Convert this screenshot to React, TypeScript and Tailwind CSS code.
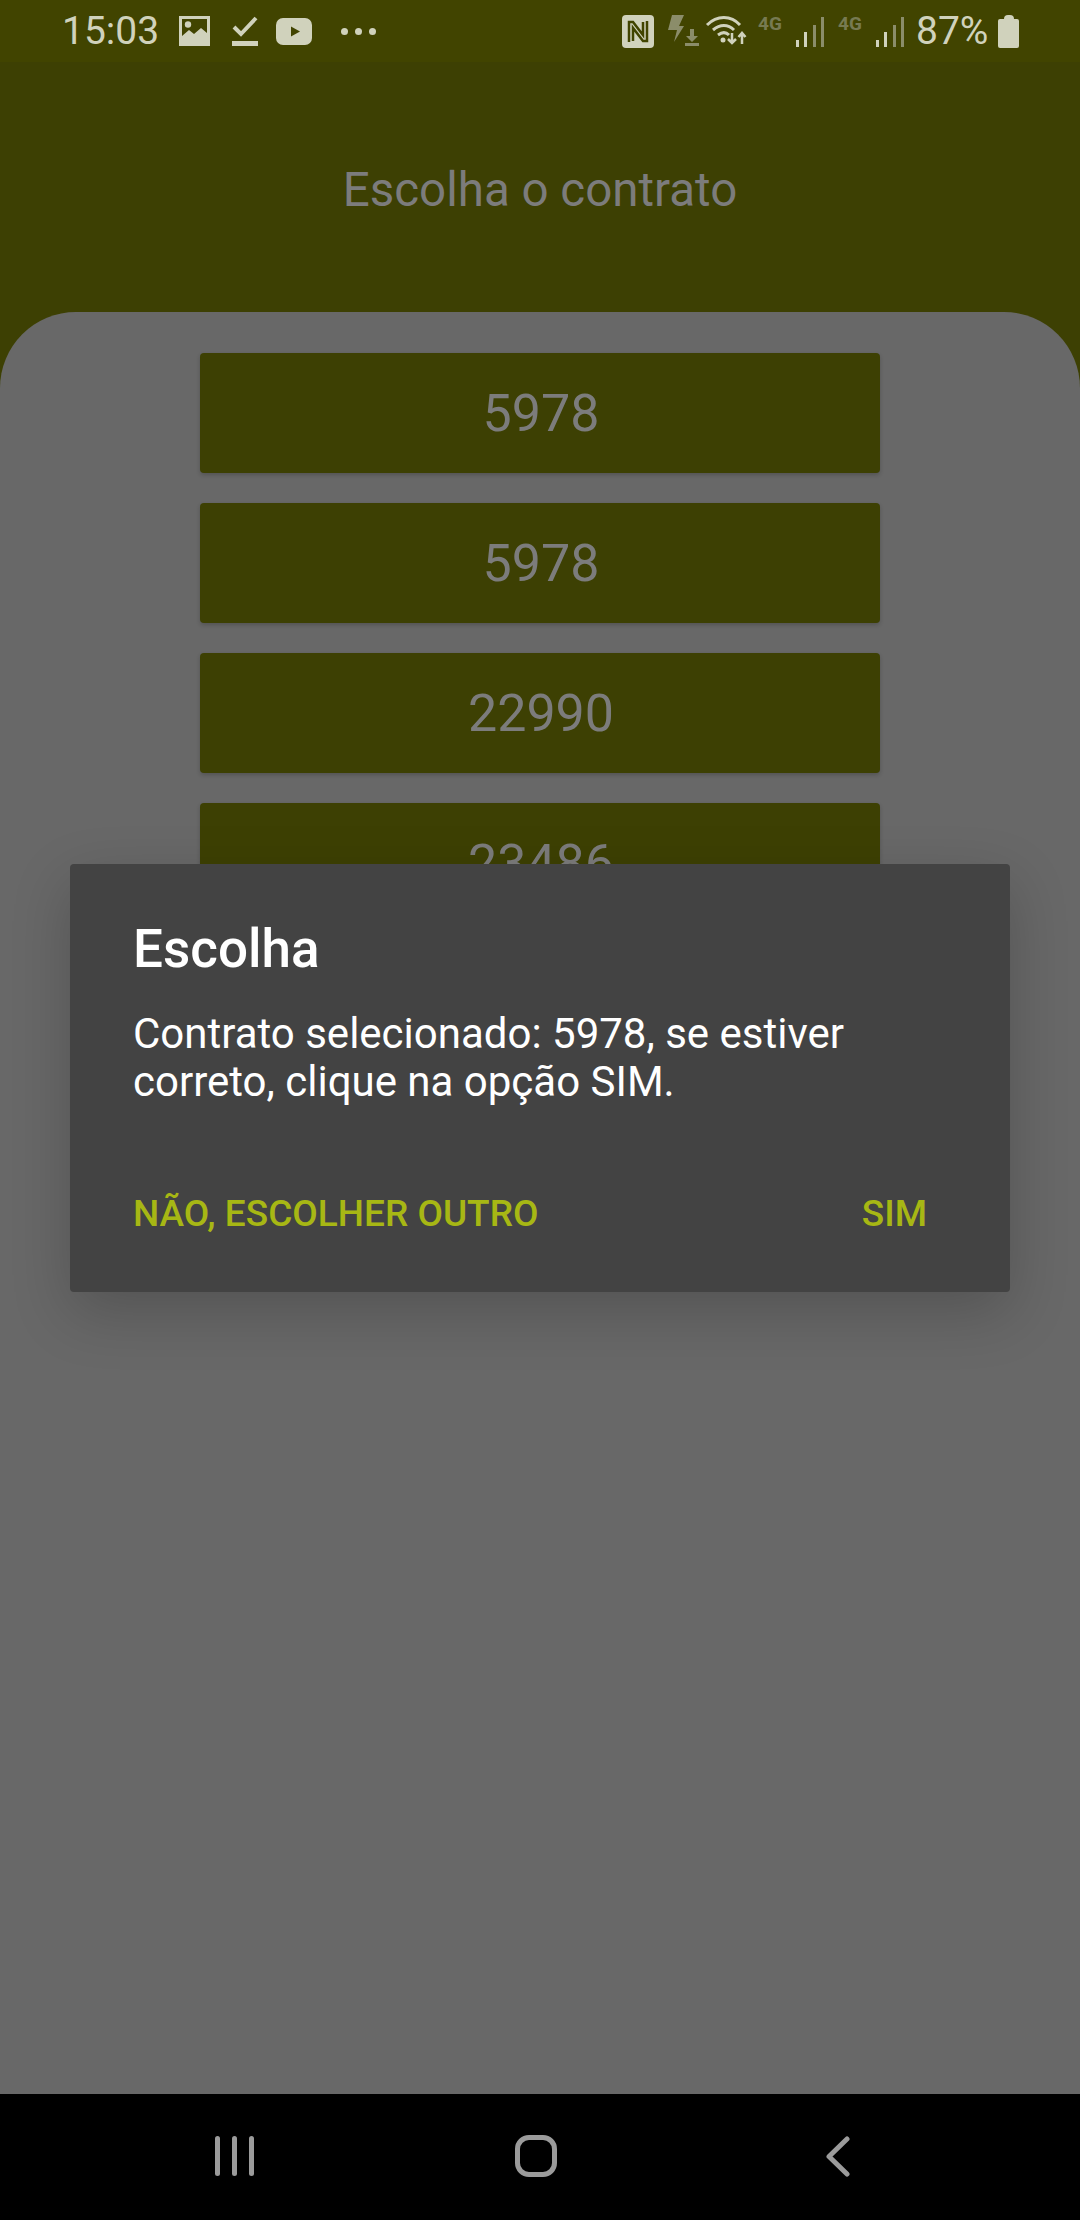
const contracts = ['5978', '5978', '22990', '23486']

function ImageIcon() {
  return (
    <svg width="31" height="30" viewBox="0 0 31 30" className="shrink-0">
      <path fillRule="evenodd" d="M0 0h31v30H0z M3 3v17l7-6 5 4 7-6 6 5V3z" fill="#d0d2bc" />
      <circle cx="9" cy="8.500" r="3.200" fill="#d0d2bc" />
    </svg>
  )
}

function CheckIcon() {
  return (
    <svg width="26" height="30" viewBox="0 0 26 30" className="shrink-0">
      <path d="M2 11l7 7L24 2" fill="none" stroke="#d0d2bc" strokeWidth="4" />
      <rect x="0" y="25" width="26" height="5" fill="#d0d2bc" />
    </svg>
  )
}

function YoutubeIcon() {
  return (
    <svg width="36" height="27" viewBox="0 0 36 27" className="shrink-0">
      <rect x="0" y="0" width="36" height="27" rx="7" fill="#d0d2bc" />
      <path d="M15 8.500l9 5-9 5z" fill="#414400" />
    </svg>
  )
}

function NfcIcon() {
  return (
    <svg width="32" height="33" viewBox="0 0 32 33" className="shrink-0">
      <rect x="0" y="0" width="32" height="33" rx="4" fill="#d0d2bc" />
      <path d="M7 27V7h4l10 13V7M25 6v20h-4L11 13v13" fill="none" stroke="#414400" strokeWidth="2.500" />
    </svg>
  )
}

function BoltDownIcon() {
  return (
    <svg width="32" height="32" viewBox="0 0 32 32" className="shrink-0">
      <path d="M4 0h12l-5 11h5L6 27l3-12H0z" fill="#8b8d6a" />
      <path d="M22 14h4v7h4l-6 6-6-6h4z M17 28h14v3H17z" fill="#8b8d6a" />
    </svg>
  )
}

function WifiIcon() {
  return (
    <svg width="42" height="31" viewBox="0 0 42 31" className="shrink-0">
      <path d="M2 11C12 1 26 1 35 11M8 16c7-6 15-6 21 0M13 21c4-3 8-3 11 0" fill="none" stroke="#d0d2bc" strokeWidth="3" />
      <circle cx="18" cy="26" r="2.500" fill="#d0d2bc" />
      <path d="M27 19v9M23 25l4 4 4-4M37 30V19M33.500 23l3.500-4 3.500 4" fill="none" stroke="#d0d2bc" strokeWidth="2.500" />
    </svg>
  )
}

function SignalIcon() {
  return (
    <svg width="28" height="30" viewBox="0 0 28 30" className="shrink-0">
      <rect x="0" y="23" width="3" height="7" fill="#d0d2bc" />
      <rect x="8" y="15" width="3" height="15" fill="#d0d2bc" />
      <rect x="17" y="8" width="3" height="22" fill="#8b8d6a" />
      <rect x="25" y="0" width="3" height="30" fill="#8b8d6a" />
    </svg>
  )
}

function Network() {
  return (
    <div className="flex items-start">
      <span className="w-[38px] text-[19px] leading-[16px] font-bold text-[#777a52]">4G</span>
      <div className="mt-[1px]">
        <SignalIcon />
      </div>
    </div>
  )
}

function StatusBar() {
  return (
    <div className="flex h-[62px] items-center justify-between bg-[#414400] pr-[61px] pl-[62px] text-[#d0d2bc]">
      <div className="flex items-center">
        <span className="w-[117px] text-[39px] leading-none">15:03</span>
        <ImageIcon />
        <div className="ml-[22px]">
          <CheckIcon />
        </div>
        <div className="ml-[18px]">
          <YoutubeIcon />
        </div>
        <div className="ml-[29px] flex gap-[7px]">
          <span className="h-[7px] w-[7px] rounded-full bg-[#d0d2bc]" />
          <span className="h-[7px] w-[7px] rounded-full bg-[#d0d2bc]" />
          <span className="h-[7px] w-[7px] rounded-full bg-[#d0d2bc]" />
        </div>
      </div>
      <div className="flex items-center">
        <NfcIcon />
        <div className="ml-[14px]">
          <BoltDownIcon />
        </div>
        <div className="ml-[5px] -mt-[4px]">
          <WifiIcon />
        </div>
        <div className="ml-[11px]">
          <Network />
        </div>
        <div className="ml-[14px]">
          <Network />
        </div>
        <span className="ml-[12px] w-[72px] text-[39px] leading-none">87%</span>
        <div className="ml-[10px] flex flex-col items-center">
          <span className="h-[4px] w-[10px] rounded-t-sm bg-[#d0d2bc]" />
          <span className="h-[29px] w-[21px] rounded-[2px] bg-[#d0d2bc]" />
        </div>
      </div>
    </div>
  )
}

function NavBar() {
  return (
    <div className="flex h-[126px] items-start bg-black pt-[42px]">
      <div className="ml-[215px] flex h-[40px] gap-[12px]">
        <span className="w-[5px] rounded-full bg-[#9b9b9b]" />
        <span className="w-[5px] rounded-full bg-[#9b9b9b]" />
        <span className="w-[5px] rounded-full bg-[#9b9b9b]" />
      </div>
      <div className="ml-[261px] -mt-[1px] h-[42px] w-[42px] rounded-[14px] border-[5px] border-[#9b9b9b]" />
      <svg width="24" height="42" viewBox="0 0 24 42" className="ml-[269px]">
        <path d="M21 3L3 20.500 21 38" fill="none" stroke="#9b9b9b" strokeWidth="5" strokeLinecap="round" strokeLinejoin="round" />
      </svg>
    </div>
  )
}

export default function App() {
  return (
    <div className="relative flex h-[2220px] w-[1080px] flex-col overflow-hidden bg-[#3d4003] font-['Roboto',sans-serif]">
      <StatusBar />

      <div className="flex h-[250px] items-start justify-center pt-[101px]">
        <h1 className="text-[47.500px] leading-[54px] text-[#7c7c7c]">Escolha o contrato</h1>
      </div>

      <div className="flex flex-1 flex-col items-center gap-[30px] rounded-t-[76px] bg-[#686868] pt-[41px]">
        {contracts.map((c, i) => (
          <div
            key={i}
            className="flex h-[120px] w-[680px] shrink-0 items-center justify-center rounded-[4px] bg-[#3d4003] pt-[2px] pl-[2px] text-[52px] text-[#7c7c7c] shadow-[0_2px_4px_rgba(0,0,0,0.2)]"
          >
            {c}
          </div>
        ))}
      </div>

      <NavBar />

      {/* dialog sits over the list */}
      <div className="absolute top-[864px] left-[70px] flex h-[428px] w-[940px] flex-col rounded-[4px] bg-[#434343] pr-[83px] pl-[63px] shadow-[0_20px_60px_rgba(0,0,0,0.2)]">
        <h2 className="mt-[54px] text-[53px] leading-[62px] font-medium text-white">Escolha</h2>
        <p className="mt-[30px] text-[42px] leading-[48px] text-white">
          Contrato selecionado: 5978, se estiver
          <br />
          correto, clique na opção SIM.
        </p>
        <div className="mt-[86px] flex justify-between text-[37px] leading-[44px] font-medium text-[#a7b714]">
          <span>NÃO, ESCOLHER OUTRO</span>
          <span>SIM</span>
        </div>
      </div>
    </div>
  )
}
